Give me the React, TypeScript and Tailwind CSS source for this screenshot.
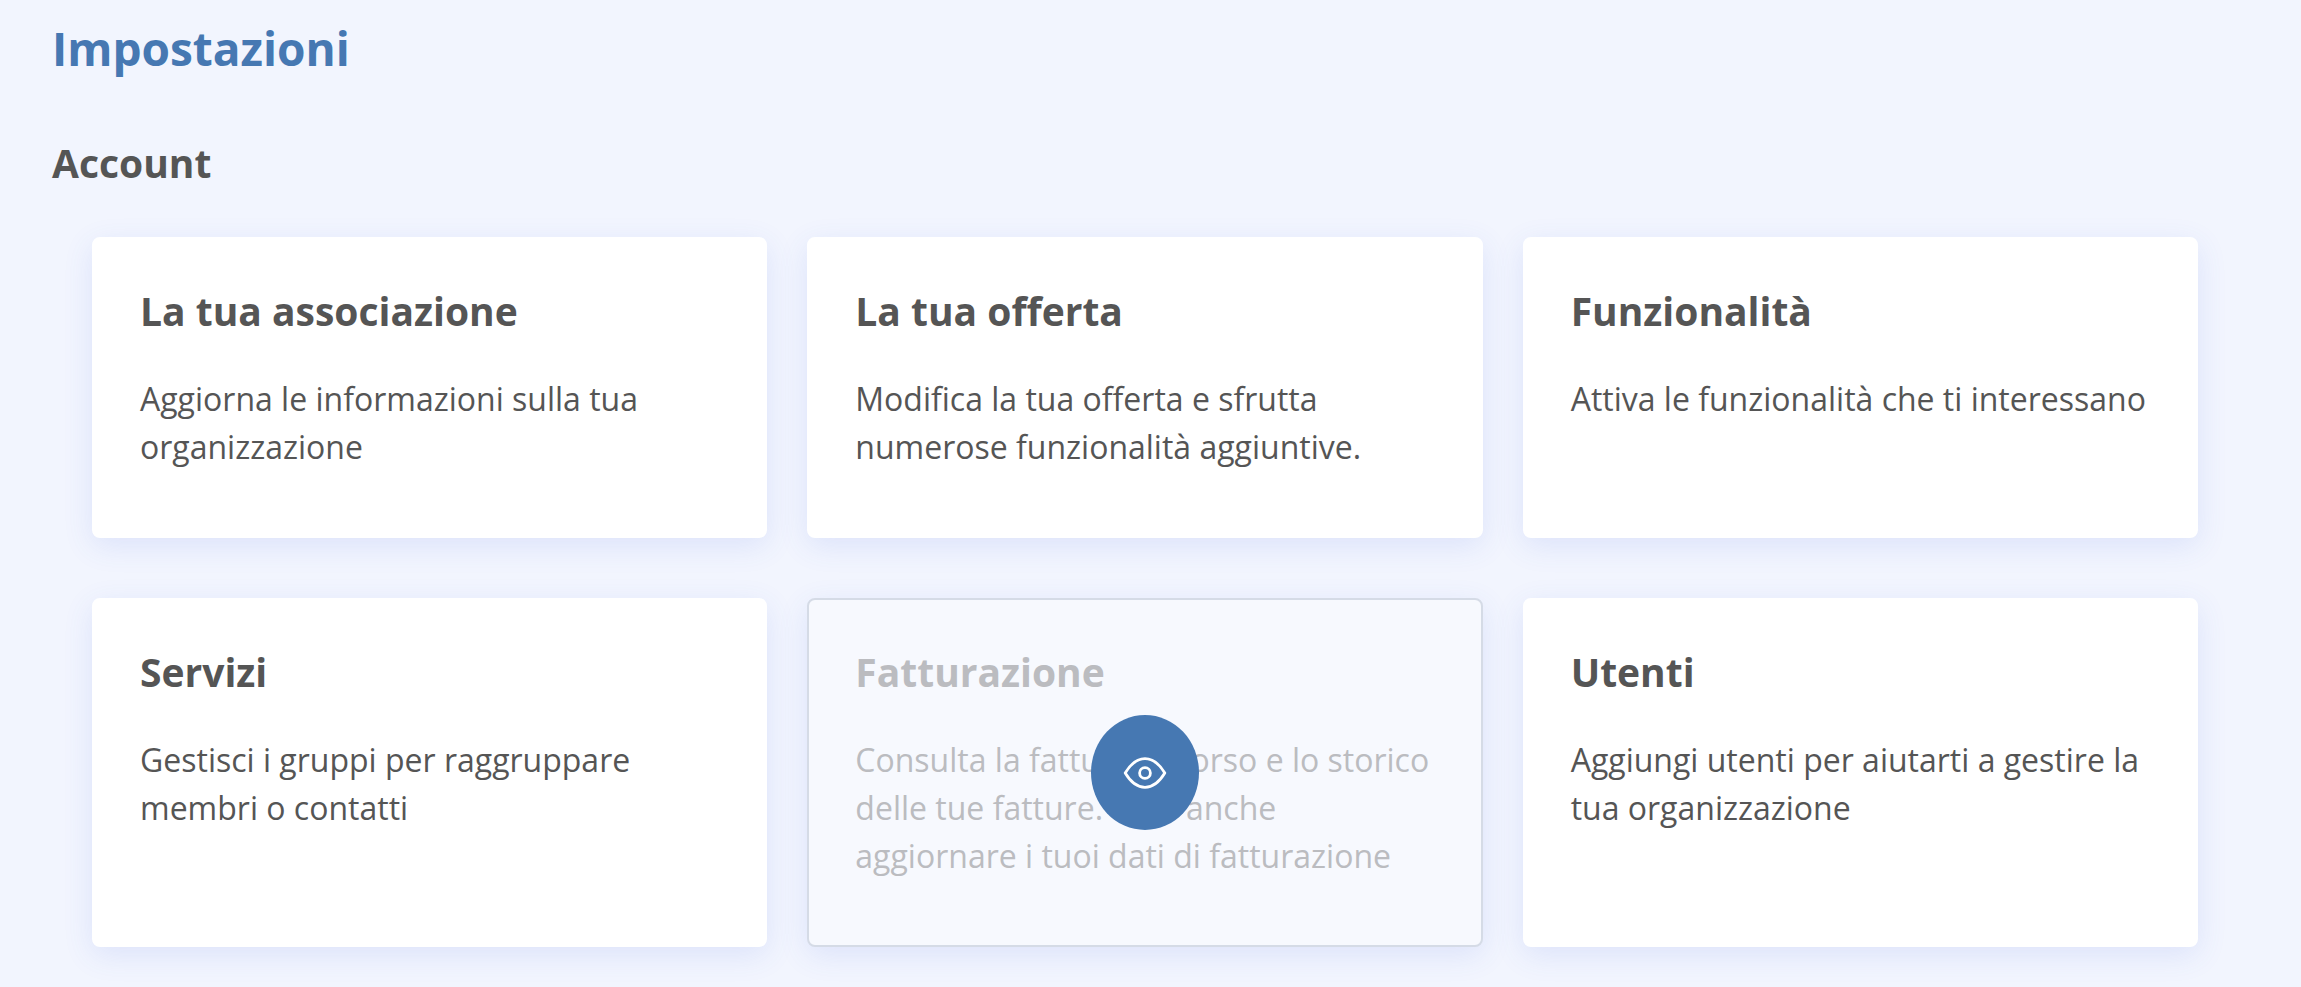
import React from 'react';

interface SettingsItem {
  id: string;
  title: string;
  description: string;
  active?: boolean;
}

const accountItems: SettingsItem[] = [
  {
    id: 'associazione',
    title: 'La tua associazione',
    description: 'Aggiorna le informazioni sulla tua organizzazione',
  },
  {
    id: 'offerta',
    title: 'La tua offerta',
    description: 'Modifica la tua offerta e sfrutta numerose funzionalità aggiuntive.',
  },
  {
    id: 'funzionalita',
    title: 'Funzionalità',
    description: 'Attiva le funzionalità che ti interessano',
  },
  {
    id: 'servizi',
    title: 'Servizi',
    description: 'Gestisci i gruppi per raggruppare membri o contatti',
  },
  {
    id: 'fatturazione',
    title: 'Fatturazione',
    description:
      'Consulta la fattura in corso e lo storico delle tue fatture. Puoi anche aggiornare i tuoi dati di fatturazione',
    active: true,
  },
  {
    id: 'utenti',
    title: 'Utenti',
    description: 'Aggiungi utenti per aiutarti a gestire la tua organizzazione',
  },
];

const EyeIcon: React.FC = () => (
  <svg
    viewBox="0 0 44 34"
    className="w-11"
    fill="none"
    stroke="currentColor"
    strokeWidth="2.8"
    strokeLinejoin="round"
    aria-hidden="true"
  >
    <path d="M2.2 17C7.5 8.2 13.5 2.7 22 2.7S36.5 8.2 41.8 17C36.5 25.8 30.5 31.3 22 31.3S7.5 25.8 2.2 17Z" />
    <circle cx="22" cy="17" r="5.4" />
  </svg>
);

const SettingsCard: React.FC<{ item: SettingsItem }> = ({ item }) => (
  <article
    className={`relative rounded-lg border-2 px-[46px] pt-[46px] pb-[65px] shadow-[0_8px_30px_rgba(65,100,225,0.12)] ${
      item.active ? 'border-[#d5dbe6] bg-[#f7f9fe] text-[#bbbcc0]' : 'border-white bg-white'
    }`}
  >
    <h3 className="mb-[38px] text-[39px] leading-[52px] font-bold">{item.title}</h3>
    <p className="text-[32px] leading-[48px]">{item.description}</p>

    {/* Open button over the highlighted card */}
    {item.active && (
      <div className="absolute inset-0 flex items-center justify-center">
        <button
          type="button"
          aria-label={item.title}
          className="flex h-[115px] w-[108px] items-center justify-center rounded-[50%] bg-[#4678b2] text-white"
        >
          <EyeIcon />
        </button>
      </div>
    )}
  </article>
);

const App: React.FC = () => {
  return (
    <main className="min-h-screen bg-[#f2f5fe] pt-[18px] pr-[63px] pb-10 pl-[52px] font-['Open_Sans',sans-serif] text-[#555555]">
      <h1 className="text-[46px] leading-[60px] font-bold text-[#4678b2]">Impostazioni</h1>

      <section className="mt-[59px]">
        <h2 className="text-[39px] leading-[52px] font-bold">Account</h2>
        <div className="mt-12 grid grid-cols-1 gap-x-10 gap-y-[60px] px-10 md:grid-cols-3">
          {accountItems.map((item) => (
            <SettingsCard key={item.id} item={item} />
          ))}
        </div>
      </section>
    </main>
  );
};

export default App;
